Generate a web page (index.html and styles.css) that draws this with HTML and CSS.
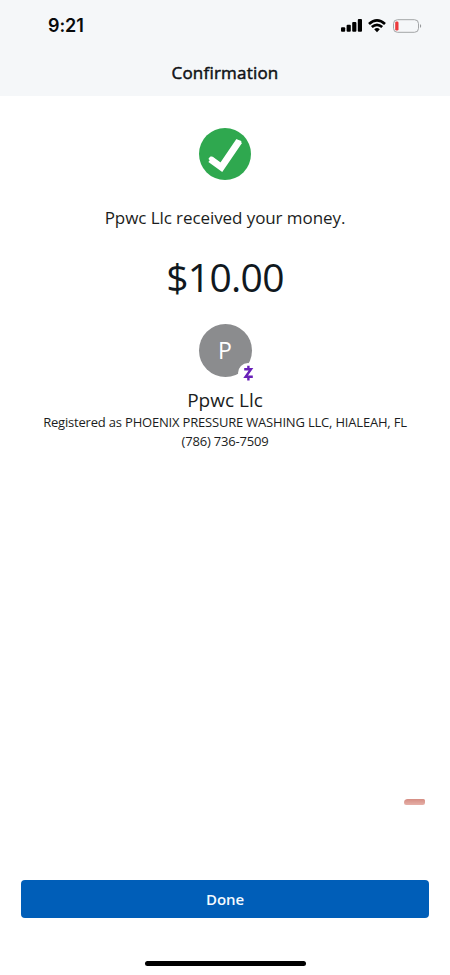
FILE: index.html
```html
<!DOCTYPE html>
<html lang="en">
<head>
<meta charset="utf-8">
<title>Confirmation</title>
<link rel="stylesheet" href="styles.css">
</head>
<body>
<header class="header">
  <div class="status">
    <span class="time">9:21</span>
    <svg class="status-icons" width="82" height="16" viewBox="0 0 82 16">
      <rect x="1" y="9.2" width="4.2" height="4.6" rx="1"/>
      <rect x="6.6" y="6.8" width="4.2" height="7" rx="1"/>
      <rect x="12.2" y="4" width="4.2" height="9.8" rx="1"/>
      <rect x="17.8" y="1.1" width="4.2" height="12.7" rx="1"/>
      <g fill="none" stroke="#000" stroke-width="2.7">
        <path d="M29 5.9Q37 -1.3 45 5.9"/>
        <path d="M31.8 9.1Q37 4.6 42.2 9.1"/>
      </g>
      <path d="M34.2 11.2Q37 9 39.8 11.2L37 14.2Z"/>
      <rect x="53.5" y="1.7" width="25" height="12.6" rx="4" fill="none" stroke="#a3a5a7"/>
      <rect x="55.2" y="3.4" width="3.3" height="9.2" rx="1.4" fill="#ec3a3c"/>
      <path d="M80 6Q82.4 8 80 10Z" fill="#96989a"/>
    </svg>
  </div>
  <h1 class="title">Confirmation</h1>
</header>
<main class="content">
  <svg class="check" width="52" height="52" viewBox="0 0 52 52">
    <circle cx="26" cy="26" r="26" fill="#2fa84f"/>
    <path d="M11.4 31.2L22.4 39.2L40.2 13" fill="none" stroke="#fff" stroke-width="6.8"/>
    <path d="M10.6 30.8L12 29.4L22.4 37L38.6 12.6L41.4 13.6L22.8 41Z" fill="#fff" stroke="#fff" stroke-width="2" stroke-linejoin="round"/>
  </svg>
  <p class="message">Ppwc Llc received your money.</p>
  <p class="amount">$10.00</p>
  <div class="avatar">
    <span class="initial">P</span>
    <svg class="badge" width="20" height="20" viewBox="0 0 20 20">
      <circle cx="10" cy="10" r="10" fill="#fff"/>
      <path d="M6.2 6.2H13L7.6 13.8H14.8M10.4 2.7V6M10.4 14V17.4" fill="none" stroke="#6820b8" stroke-width="2.4"/>
    </svg>
  </div>
  <h2 class="name">Ppwc Llc</h2>
  <p class="detail">Registered as PHOENIX PRESSURE WASHING LLC, HIALEAH, FL</p>
  <p class="detail">(786) 736-7509</p>
</main>
<span class="smudge"></span>
<footer class="footer">
  <button class="done">Done</button>
  <span class="home"></span>
</footer>
</body>
</html>
```
FILE: styles.css
```css
* { box-sizing: border-box; }
body {
  margin: 0;
  height: 975px;
  display: flex;
  flex-direction: column;
  overflow: hidden;
  background: #fff;
  color: #1b1d21;
  font-family: "Open Sans", sans-serif;
}
h1, h2, p { margin: 0; white-space: nowrap; }
.header { height: 96px; background: #f5f7f9; }
.status {
  height: 50px;
  padding: 2px 28px 0 48px;
  display: flex;
  align-items: center;
  justify-content: space-between;
}
.time { font: 600 18px/24px Inter, sans-serif; letter-spacing: -0.1px; color: #080a0c; }
.title {
  font-size: 17px;
  font-weight: 400;
  letter-spacing: 0.2px;
  -webkit-text-stroke: 0.5px #101215;
  line-height: 24px;
  margin-top: 11px;
  text-align: center;
  color: #101215;
}
.content {
  flex: 1;
  padding-top: 32px;
  display: flex;
  flex-direction: column;
  align-items: center;
}
.check { display: block; }
.message { margin-top: 26px; font-size: 17px; letter-spacing: -0.08px; line-height: 24px; }
.amount { margin-top: 20px; font-size: 39px; letter-spacing: -0.7px; line-height: 54px; color: #101820; }
.avatar {
  position: relative;
  width: 53px;
  height: 53px;
  margin-top: 20px;
  border-radius: 50%;
  background: #8b8c8e;
  display: flex;
  align-items: center;
  justify-content: center;
}
.initial { color: #fff; font-size: 23px; line-height: 30px; transform: translateY(-1px); }
.badge { position: absolute; left: 39px; top: 39px; }
.name { margin-top: 10px; font-size: 19px; font-weight: 400; line-height: 26px; }
.detail { font-size: 13px; letter-spacing: -0.19px; line-height: 19px; }
.smudge {
  align-self: flex-end;
  width: 21px;
  height: 6px;
  margin: 0 25px 75px 0;
  border-radius: 5px 2px 3px 3px;
  background: linear-gradient(#d58d83, #e6b0a8);
  filter: blur(0.6px);
}
.footer {
  height: 95px;
  padding: 0 21px;
  display: flex;
  flex-direction: column;
  align-items: center;
}
.done {
  width: 100%;
  height: 38px;
  padding: 0;
  border: 0;
  border-radius: 4px;
  background: #005eb8;
  color: #f4faff;
  font: 600 15px/20px "Open Sans", sans-serif;
  letter-spacing: -0.1px;
}
.home {
  width: 161px;
  height: 5px;
  margin-top: 43px;
  border-radius: 3px;
  background: #000;
}
```
